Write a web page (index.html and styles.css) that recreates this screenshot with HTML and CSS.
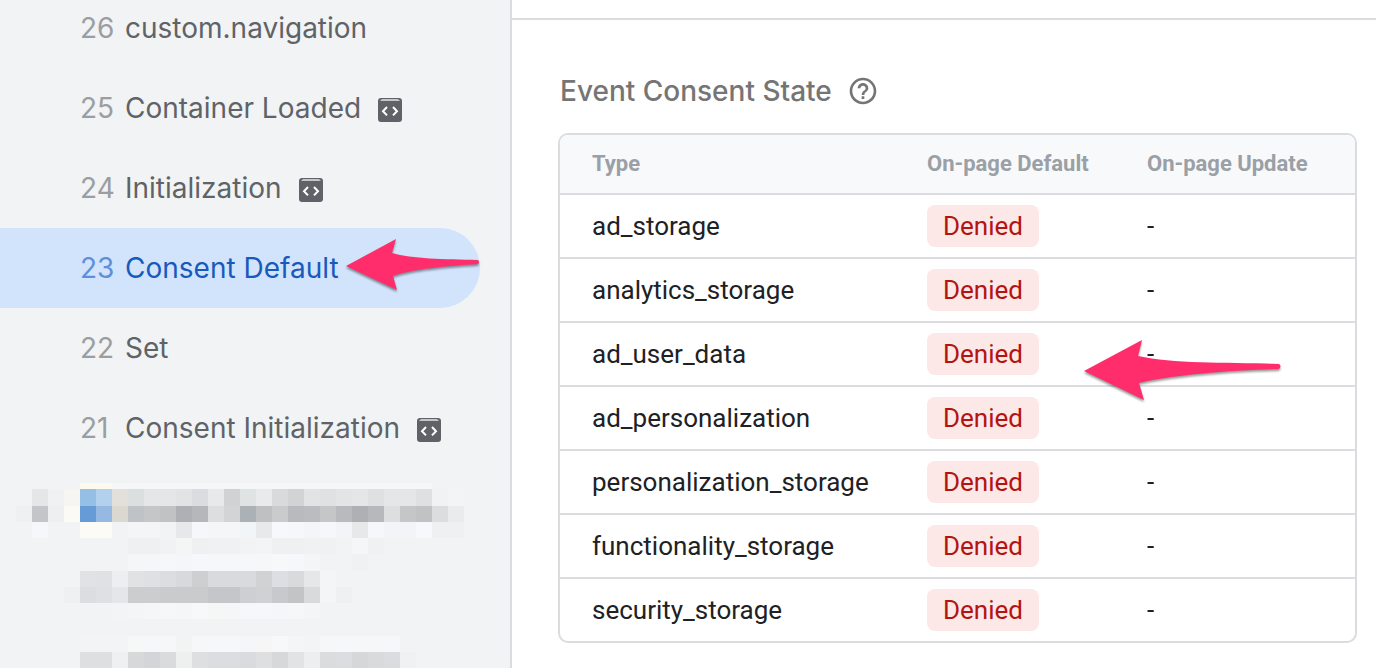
FILE: index.html
```
<!DOCTYPE html>
<html lang="en">
<head>
    <meta charset="UTF-8">
    <meta name="viewport" content="width=device-width, initial-scale=1.0">
    <title>Event Consent State</title>
    <link rel="stylesheet" href="styles.css">
</head>
<body>
    <svg class="symbols" aria-hidden="true">
        <symbol id="icon-code" viewBox="0 0 24 24">
            <rect width="24" height="24" rx="3" fill="#5f6368"/>
            <path d="M4 1h16l2 2H2z" fill="#c3c5c8"/>
            <path d="M9 9L5 13.200 9 17.400M15 9l4 4.200-4 4.200" fill="none" stroke="#fff" stroke-width="2"/>
        </symbol>
    </svg>

    <aside class="sidebar">
        <nav class="events">
            <a href="#" class="event"><span class="number">26</span><span>custom.navigation</span></a>
            <a href="#" class="event"><span class="number">25</span><span>Container Loaded</span><svg class="code-icon"><use href="#icon-code"/></svg></a>
            <a href="#" class="event"><span class="number">24</span><span>Initialization</span><svg class="code-icon"><use href="#icon-code"/></svg></a>
            <a href="#" class="event active"><span class="number">23</span><span>Consent Default</span>
                <svg class="arrow arrow-event" viewBox="0 0 134 54"><path d="M0 27L50 0 46 14C66 20 98 20 132 21Q134 23 132 25C100 27 66 30 47 37L51 51z"/></svg>
            </a>
            <a href="#" class="event"><span class="number">22</span><span>Set</span></a>
            <a href="#" class="event"><span class="number">21</span><span>Consent Initialization</span><svg class="code-icon"><use href="#icon-code"/></svg></a>
        </nav>
        <svg class="mosaic" id="mosaic" viewBox="0 0 30 12" preserveAspectRatio="none" aria-hidden="true"></svg>
    </aside>

    <main class="content">
        <div class="topbar"></div>
        <section class="consent">
            <div class="title">
                <h2>Event Consent State</h2>
                <button type="button" class="help" aria-label="Help">
                    <svg viewBox="0 0 24 24"><path d="M11 18h2v-2h-2v2zm1-16C6.480 2 2 6.480 2 12s4.480 10 10 10 10-4.480 10-10S17.520 2 12 2zm0 18c-4.410 0-8-3.590-8-8s3.590-8 8-8 8 3.590 8 8-3.590 8-8 8zm0-14c-2.210 0-4 1.790-4 4h2c0-1.100.9-2 2-2s2 .9 2 2c0 2-3 1.750-3 5h2c0-2.250 3-2.500 3-5 0-2.210-1.790-4-4-4z"/></svg>
                </button>
            </div>
            <div class="table-box">
                <table>
                    <colgroup><col class="col-type"><col class="col-default"><col></colgroup>
                    <thead>
                        <tr><th>Type</th><th>On-page Default</th><th>On-page Update</th></tr>
                    </thead>
                    <tbody>
                        <tr><td>ad_storage</td><td><span class="badge">Denied</span></td><td>-</td></tr>
                        <tr><td>analytics_storage</td><td><span class="badge">Denied</span></td><td>-</td></tr>
                        <tr><td>ad_user_data</td><td><span class="badge">Denied</span></td><td class="marked">-
                            <svg class="arrow arrow-table" viewBox="0 0 198 62"><path d="M0 31L58 0 54 16C90 24 140 22 195 24Q198 26 195 29C140 31 96 34 55 43L60 60z"/></svg>
                        </td></tr>
                        <tr><td>ad_personalization</td><td><span class="badge">Denied</span></td><td>-</td></tr>
                        <tr><td>personalization_storage</td><td><span class="badge">Denied</span></td><td>-</td></tr>
                        <tr><td>functionality_storage</td><td><span class="badge">Denied</span></td><td>-</td></tr>
                        <tr><td>security_storage</td><td><span class="badge">Denied</span></td><td>-</td></tr>
                    </tbody>
                </table>
            </div>
        </section>
    </main>

    <script>
        // hidden events: [row, first column, colors], one color per cell
        const mosaic = document.getElementById('mosaic');
        const cells = [
            [1, 2, 'e5e6e8 eff1f2 f7f5f1 95bfe5 b3d1ec e3dfdb dbdfe0 e4e6e7 e4e6e7 e1e3e4 dadcdf e7e9ea d0d2d3 dfe3e4 e8eaeb d8dadc d1d3d5 e1e3e5 dfe1e3 e2e4e6 e4e6e7 dee0e2 e5e6e8 e5e6e8 dee0e2 f0f2f4 f3f4f6'],
            [2, 1, 'eff0f1 c3c5c9 eeeff1 fbfaf5 659cd7 95b9e3 dbd8d2 bfc3c7 c4c6c7 c0c2c4 aeb0b5 b5b7bb dcdee0 d2d4d5 abb1b4 bfc0c2 c9cbcd b8babe babcc0 c5c6c8 b8babe aeb0b4 b6b8bc dcdee0 c4c6c8 c0c2c4 dbdddf eaebed'],
            [3, 2, 'f6f7fb f1f3f4 f1f3f4 fcfbf6 fcfbf6 f1f3f4 f3f5f7 f3f5f7 f1f3f5 e7e8ea f5f7fa f4f6f8 f4f6f8 f1f5f7 e8e9eb f7f8fb f5f7fb f4f5f9 f6f7fb f2f4f7 e7e8ea f5f7fb f3f4f7 f3f4f7 f6f8fb eff0f2 eff0f2'],
            [4, 8, 'eff0f2 eff0f2 f1f2f3 f4f5f5 eff0f2 eff1f2 eff1f2 f1f3f5 f2f4f6 eff0f2 eff0f2 f0f1f3 f0f1f3 f1f3f4 f4f6f8 f0f1f3'],
            [5, 8, 'f4f6f8 f4f6f8 f6f7f8 f4f6f7 f6f7fa f5f7f8 f5f7f8 f5f7f8 f5f7f8 f7f8fa f6f7fa f4f5f7 f1f3f4 f1f3f4 eff1f2'],
            [6, 5, 'e0e2e3 dfe1e3 eceef0 e0e2e4 dfe0e3 dbdde0 d7d9dc cdcfd1 d8dadd d8dadd d8dade d0d2d4 dcdee3 d8dadc e6e7e9 f4f5f7'],
            [7, 4, 'eff0f2 dcdde0 dfe0e3 e5e6e9 cbcdcf cbcdcf c9cbcd c9cbcd c9cbcd c4c6c9 c4c6c9 cdcfd2 cfd1d3 c7c9cd c2c4c6 d8dadc f4f5f7 eff0f2'],
            [8, 5, 'f2f3f5 f2f3f5 f2f4f5 f3f5f6 f5f6f7 f6f7f9 f5f6f8 f7f8fa f5f6f6 f5f6f7 f5f7fa f6f7fa f4f6f9 f6f7f9 f3f5f6'],
            [10, 5, 'f3f4f6 f3f4f6 f2f4f5 f6f7f7 f6f7f8 f6f7f8 f2f3f3 f5f7f8 f5f7f8 f6f7f9 f5f6f7 f5f6f5 f7f8fa f4f5f7 f2f4f5 f6f7f9 f6f7f9 f6f7f9 f6f7f9 f6f7f9'],
            [11, 5, 'dddfe1 dddfe1 eff0f2 d6d8da d3d5d8 d9dbdd eef0f0 dddfe1 dbdde0 dbdde0 d9dbde dddfe0 d6d8da e1e3e5 edeef0 dadcde dbdde0 d5d7d9 d8dadc dadcdf f0f1f3']
        ];

        function addCell(x, y, width, height, color) {
            const rect = document.createElementNS('http://www.w3.org/2000/svg', 'rect');
            rect.setAttribute('x', x);
            rect.setAttribute('y', y);
            rect.setAttribute('width', width);
            rect.setAttribute('height', height);
            rect.setAttribute('fill', color);
            mosaic.appendChild(rect);
        }

        addCell(5, 0.6, 2, 0.4, '#fcf9ee');
        addCell(7, 0.6, 20, 0.4, '#f5f6f8');
        cells.forEach(([row, start, colors]) => {
            colors.split(' ').forEach((color, i) => addCell(start + i, row, 1, 1, '#' + color));
        });
    </script>
</body>
</html>
```
FILE: styles.css
```
* {
    box-sizing: border-box;
}

body {
    display: flex;
    margin: 0;
    height: 100vh;
    overflow: hidden;
    background-color: #fff;
    color: #202124;
    font-family: Roboto, Arial, sans-serif;
}

.symbols {
    display: none;
}

.sidebar {
    flex: 0 0 512px;
    overflow: hidden;
    background-color: #f1f3f4;
    border-right: 2px solid #dadce0;
    font-family: Inter, sans-serif;
}

/* list is scrolled a little past the first event */
.events {
    margin-top: -12px;
    padding-right: 30px;
}

.event {
    position: relative;
    display: flex;
    align-items: center;
    height: 80px;
    padding-left: 80px;
    border-radius: 0 40px 40px 0;
    color: #5f6368;
    font-size: 28px;
    text-decoration: none;
}

.number {
    width: 45px;
    color: #9b9da0;
}

.active {
    background-color: #d2e3fc;
    color: #185abc;
}

.active .number {
    color: #5e8fdc;
}

.code-icon {
    width: 24px;
    height: 24px;
    margin: 4px 0 0 17px;
}

.mosaic {
    display: block;
    width: 480px;
    height: 195px;
    margin-top: 5px;
    shape-rendering: crispEdges;
}

.arrow {
    position: absolute;
    overflow: visible;
    fill: #ff2d6c;
    filter: drop-shadow(0 2px 1px rgba(0, 0, 0, 0.4));
}

.arrow-event {
    right: 0;
    top: 11px;
    width: 134px;
    height: 54px;
}

.arrow-table {
    left: -31px;
    top: 17px;
    width: 198px;
    height: 62px;
}

.content {
    flex: 1;
    min-width: 0;
}

.topbar {
    height: 20px;
    border-bottom: 2px solid #dadce0;
}

.consent {
    padding: 48px 19px 0 46px;
}

.title {
    display: flex;
    align-items: center;
    gap: 15px;
    height: 46px;
    margin-bottom: 19px;
    padding-left: 2px;
    color: #757575;
}

.title h2 {
    margin: 0;
    font-family: Inter, sans-serif;
    font-size: 28px;
    font-weight: 500;
}

.help {
    display: flex;
    padding: 0;
    border: none;
    background: none;
    color: inherit;
}

.help svg {
    width: 32px;
    height: 32px;
    fill: currentColor;
}

.table-box {
    border: 2px solid #dadce0;
    border-radius: 10px;
}

table {
    width: 100%;
    border-collapse: separate;
    border-spacing: 0;
    table-layout: fixed;
}

.col-type {
    width: 335px;
}

.col-default {
    width: 220px;
}

th,
td {
    padding: 0 0 0 32px;
    text-align: left;
    border-bottom: 2px solid #dadce0;
}

th {
    height: 60px;
    padding-bottom: 2px;
    background-color: #f8f9fb;
    color: #9aa0a6;
    font-size: 22px;
    font-weight: 700;
}

th:first-child {
    border-top-left-radius: 8px;
}

th:last-child {
    border-top-right-radius: 8px;
}

td {
    height: 64px;
    font-size: 26px;
}

tbody tr:last-child td {
    height: 62px;
    border-bottom: none;
}

.marked {
    position: relative;
}

.badge {
    display: inline-block;
    padding: 0 16px;
    border-radius: 8px;
    background-color: #fce8e6;
    color: #b31412;
    line-height: 42px;
}
```
